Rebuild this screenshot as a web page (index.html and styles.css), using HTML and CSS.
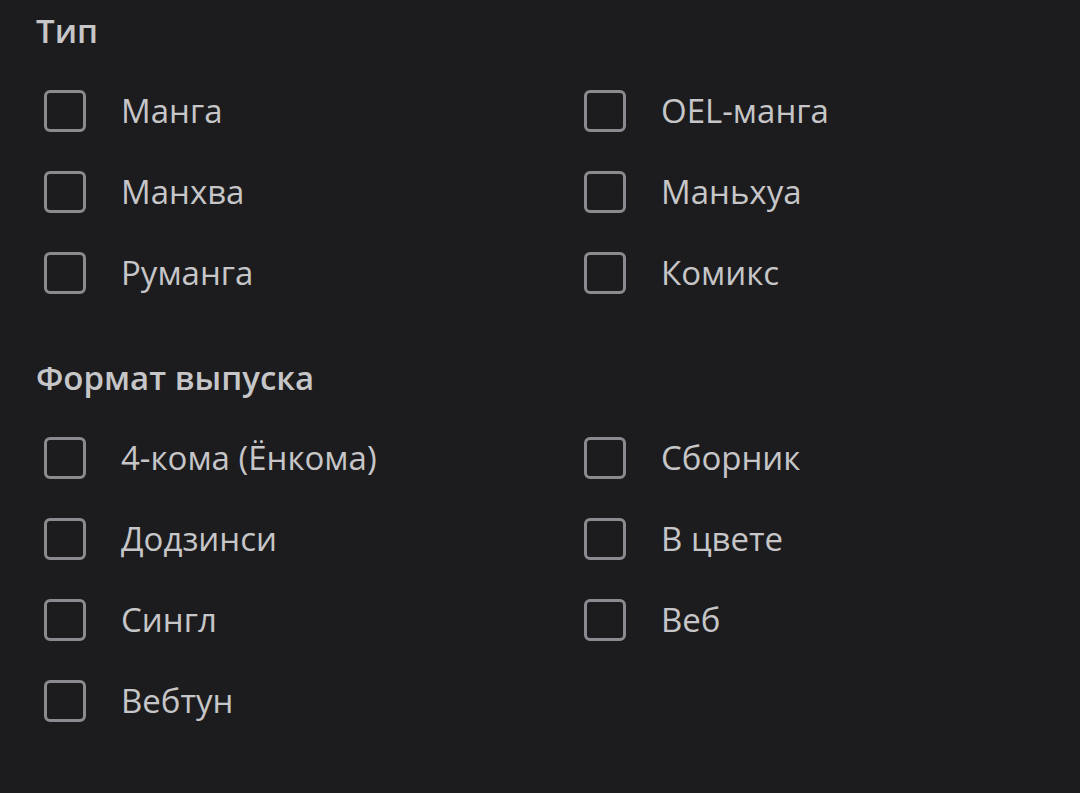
FILE: index.html
```html
<!DOCTYPE html>
<html lang="ru">
<head>
    <meta charset="UTF-8">
    <meta name="viewport" content="width=device-width, initial-scale=1.0">
    <title>Фильтр</title>
    <link rel="stylesheet" href="styles.css">
</head>
<body>
    <div class="filters">
        <div class="section">
            <h2>Тип</h2>
            <div class="options">
                <label class="option"><span class="box"></span>Манга</label>
                <label class="option"><span class="box"></span>OEL-манга</label>
                <label class="option"><span class="box"></span>Манхва</label>
                <label class="option"><span class="box"></span>Маньхуа</label>
                <label class="option"><span class="box"></span>Руманга</label>
                <label class="option"><span class="box"></span>Комикс</label>
            </div>
        </div>

        <div class="section">
            <h2>Формат выпуска</h2>
            <div class="options">
                <label class="option"><span class="box"></span>4-кома (Ёнкома)</label>
                <label class="option"><span class="box"></span>Сборник</label>
                <label class="option"><span class="box"></span>Додзинси</label>
                <label class="option"><span class="box"></span>В цвете</label>
                <label class="option"><span class="box"></span>Сингл</label>
                <label class="option"><span class="box"></span>Веб</label>
                <label class="option"><span class="box"></span>Вебтун</label>
            </div>
        </div>

        <div class="section">
            <h2>Статус тайтла</h2>
        </div>
    </div>
</body>
</html>
```

FILE: styles.css
```css
html, body {
    margin: 0;
    padding: 0;
    background-color: #1c1c1e;
    overflow: hidden;
}
body {
    font-family: "Open Sans", "Noto Sans", sans-serif;
    color: #c6c6c8;
}
.filters {
    padding: 9px 0 0 36px;
}
.section {
    margin-bottom: 43px;
}
h2 {
    margin: 0 0 17px 0;
    height: 44px;
    line-height: 44px;
    font-size: 33px;
    font-weight: 600;
    color: #c6c6c8;
}
.options {
    display: grid;
    grid-template-columns: 540px 540px;
    grid-auto-rows: 81px;
}
.option {
    display: flex;
    align-items: center;
    font-size: 33px;
    padding-left: 8px;
    cursor: pointer;
}
.box {
    width: 36px;
    height: 36px;
    border: 3.5px solid #8b8a90;
    border-radius: 6px;
    margin-right: 35px;
    flex-shrink: 0;
}
```
